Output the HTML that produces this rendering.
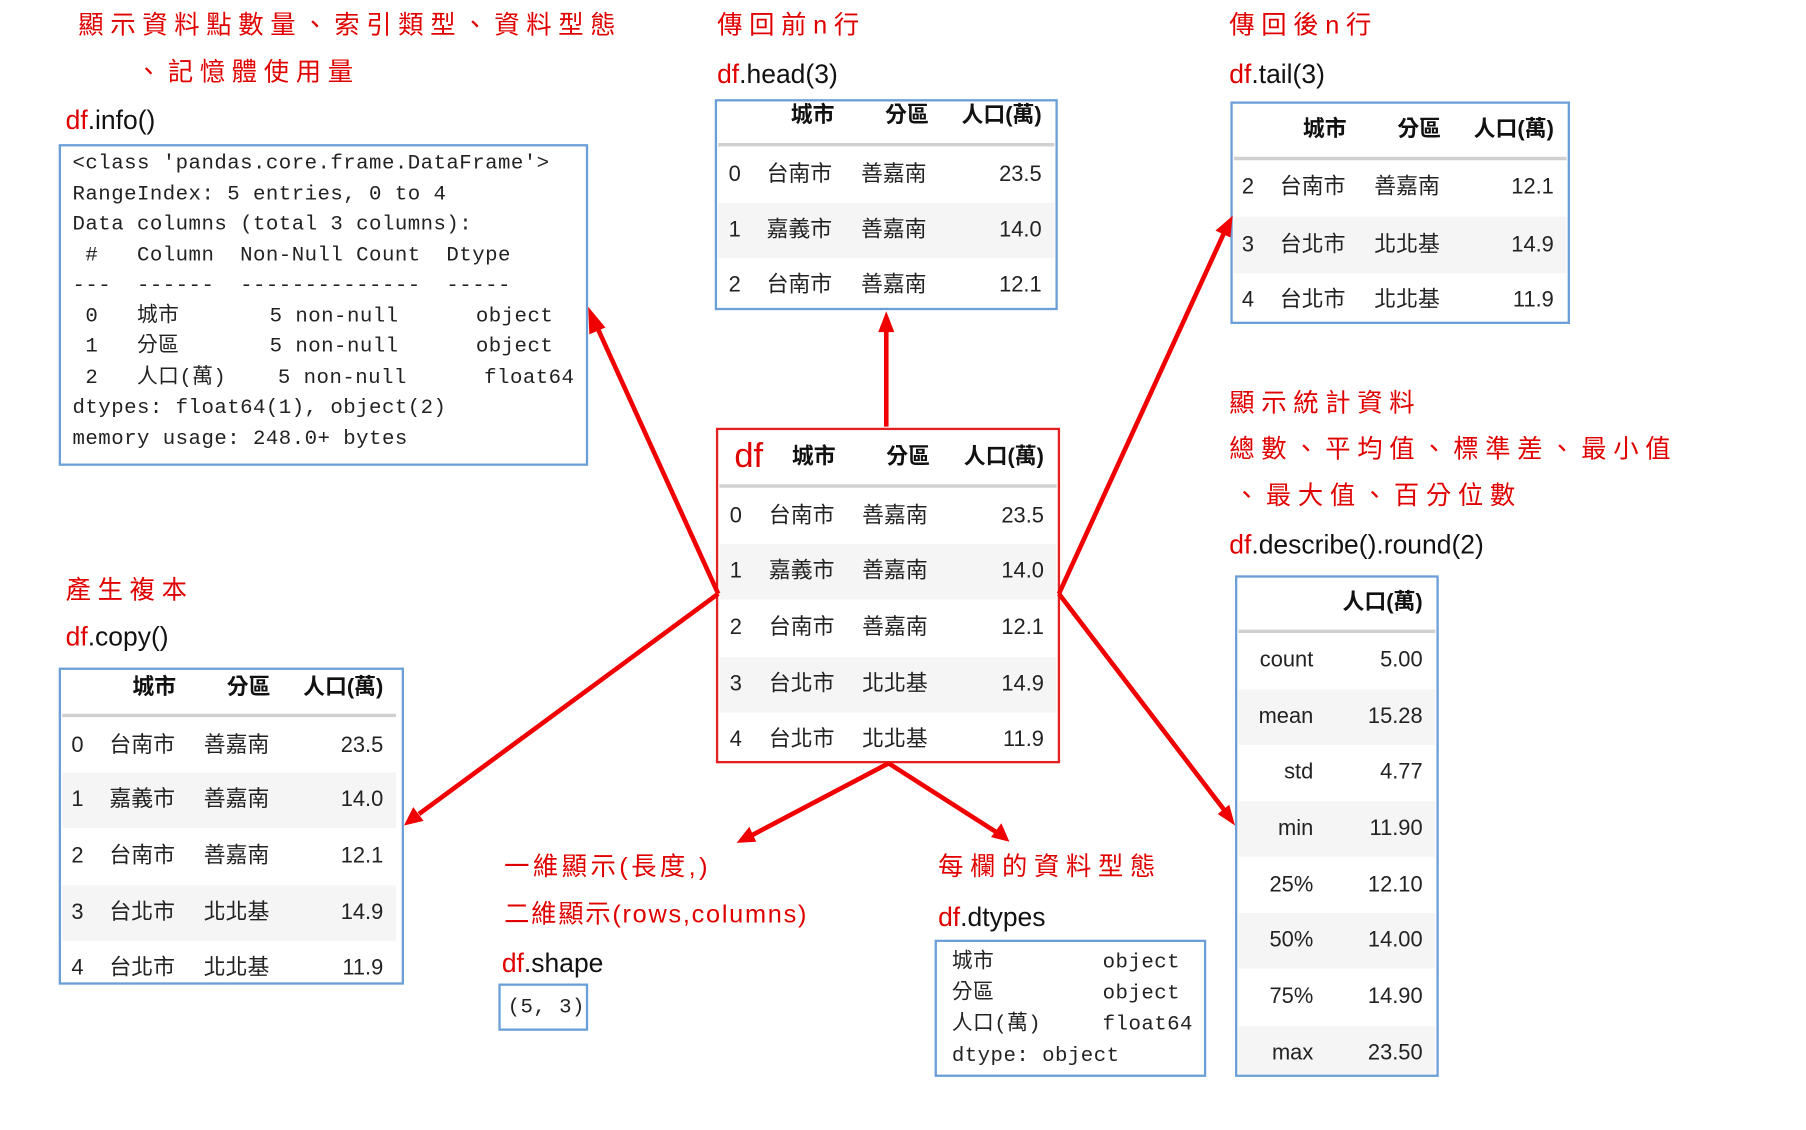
<!DOCTYPE html>
<html><head><meta charset="utf-8"><style>
html,body{margin:0;padding:0;background:#fff;overflow:hidden}
#w{position:absolute;left:0;top:0;width:1560px;height:980px;transform:scale(1.151,1.153);transform-origin:0 0;font-family:"Liberation Sans","Noto Sans CJK TC",sans-serif;color:#222}
.a{position:absolute;white-space:nowrap;line-height:24px}
.r{color:#e00000;font-size:22px;letter-spacing:5.8px}
.c{font-size:23px;color:#111}
.c b{font-weight:normal;color:#e00000}
.box{position:absolute;border:2px solid #6a9fd8;box-sizing:border-box}
.rb{border-color:#e62020}
.t{position:absolute;font-size:19px;line-height:24px;white-space:nowrap;color:#222}
.v{text-align:right;width:80px}
.h{font-weight:bold;color:#111}
.ln{position:absolute;height:3px;background:#d0d0d0}
.st{position:absolute;background:#f5f5f5}
.m{position:absolute;font-family:"Liberation Mono","Noto Sans CJK TC",monospace;font-size:18px;white-space:pre;color:#222;line-height:26.5px;letter-spacing:0.4px}
</style></head><body><div id="w">

<div class="a r" style="left:68px;top:10px">顯示資料點數量、索引類型、資料型態</div>
<div class="a r" style="left:118px;top:51px">、記憶體使用量</div>
<div class="a c" style="left:57px;top:92px"><b>df</b>.info()</div>
<div class="box" style="left:51px;top:125px;width:460px;height:279px"></div>
<div class="m" style="left:63px;top:129px">&lt;class 'pandas.core.frame.DataFrame'&gt;
RangeIndex: 5 entries, 0 to 4
Data columns (total 3 columns):
 #   Column  Non-Null Count  Dtype
---  ------  --------------  -----
 0   城市       5 non-null      object
 1   分區       5 non-null      object
 2   人口(萬)    5 non-null      float64
dtypes: float64(1), object(2)
memory usage: 248.0+ bytes</div>

<div class="a r" style="left:623px;top:10px">傳回前n行</div>
<div class="a c" style="left:623px;top:52px"><b>df</b>.head(3)</div>
<div class="box" style="left:621px;top:86px;width:298px;height:183px"></div>
<div class="st" style="left:624px;top:176px;width:292px;height:48px"></div>
<div class="ln" style="left:624px;top:124px;width:292px"></div>
<div class="t h" style="left:687px;top:89px">城市</div><div class="t h" style="left:769px;top:89px">分區</div><div class="t h v" style="left:825px;top:89px">人口(萬)</div>
<div class="t" style="left:633px;top:140px">0</div><div class="t" style="left:666px;top:140px">台南市</div><div class="t" style="left:748px;top:140px">善嘉南</div><div class="t v" style="left:825px;top:140px">23.5</div>
<div class="t" style="left:633px;top:188px">1</div><div class="t" style="left:666px;top:188px">嘉義市</div><div class="t" style="left:748px;top:188px">善嘉南</div><div class="t v" style="left:825px;top:188px">14.0</div>
<div class="t" style="left:633px;top:236px">2</div><div class="t" style="left:666px;top:236px">台南市</div><div class="t" style="left:748px;top:236px">善嘉南</div><div class="t v" style="left:825px;top:236px">12.1</div>

<div class="a r" style="left:1068px;top:10px">傳回後n行</div>
<div class="a c" style="left:1068px;top:52px"><b>df</b>.tail(3)</div>
<div class="box" style="left:1069px;top:88px;width:295px;height:193px"></div>
<div class="st" style="left:1072px;top:188px;width:289px;height:49px"></div>
<div class="ln" style="left:1072px;top:136px;width:289px"></div>
<div class="t h" style="left:1132px;top:101px">城市</div><div class="t h" style="left:1214px;top:101px">分區</div><div class="t h v" style="left:1270px;top:101px">人口(萬)</div>
<div class="t" style="left:1079px;top:151px">2</div><div class="t" style="left:1112px;top:151px">台南市</div><div class="t" style="left:1194px;top:151px">善嘉南</div><div class="t v" style="left:1270px;top:151px">12.1</div>
<div class="t" style="left:1079px;top:201px">3</div><div class="t" style="left:1112px;top:201px">台北市</div><div class="t" style="left:1194px;top:201px">北北基</div><div class="t v" style="left:1270px;top:201px">14.9</div>
<div class="t" style="left:1079px;top:249px">4</div><div class="t" style="left:1112px;top:249px">台北市</div><div class="t" style="left:1194px;top:249px">北北基</div><div class="t v" style="left:1270px;top:249px">11.9</div>

<!-- center -->
<div class="box rb" style="left:622px;top:371px;width:299px;height:291px"></div>
<div class="st" style="left:625px;top:472px;width:293px;height:48px"></div>
<div class="st" style="left:625px;top:570px;width:293px;height:48px"></div>
<div class="ln" style="left:625px;top:420px;width:293px"></div>
<div class="t" style="left:638px;top:380px;font-size:30px;line-height:32px;color:#e00000">df</div>
<div class="t h" style="left:688px;top:385px">城市</div><div class="t h" style="left:770px;top:385px">分區</div><div class="t h v" style="left:827px;top:385px">人口(萬)</div>
<div class="t" style="left:634px;top:436px">0</div><div class="t" style="left:668px;top:436px">台南市</div><div class="t" style="left:749px;top:436px">善嘉南</div><div class="t v" style="left:827px;top:436px">23.5</div>
<div class="t" style="left:634px;top:484px">1</div><div class="t" style="left:668px;top:484px">嘉義市</div><div class="t" style="left:749px;top:484px">善嘉南</div><div class="t v" style="left:827px;top:484px">14.0</div>
<div class="t" style="left:634px;top:533px">2</div><div class="t" style="left:668px;top:533px">台南市</div><div class="t" style="left:749px;top:533px">善嘉南</div><div class="t v" style="left:827px;top:533px">12.1</div>
<div class="t" style="left:634px;top:582px">3</div><div class="t" style="left:668px;top:582px">台北市</div><div class="t" style="left:749px;top:582px">北北基</div><div class="t v" style="left:827px;top:582px">14.9</div>
<div class="t" style="left:634px;top:630px">4</div><div class="t" style="left:668px;top:630px">台北市</div><div class="t" style="left:749px;top:630px">北北基</div><div class="t v" style="left:827px;top:630px">11.9</div>

<!-- stats -->
<div class="a r" style="left:1068px;top:338px">顯示統計資料</div>
<div class="a r" style="left:1068px;top:378px">總數、平均值、標準差、最小值</div>
<div class="a r" style="left:1072px;top:418px">、最大值、百分位數</div>
<div class="a c" style="left:1068px;top:460px"><b>df</b>.describe().round(2)</div>
<div class="box" style="left:1073px;top:499px;width:177px;height:435px"></div>
<div class="ln" style="left:1076px;top:546px;width:171px"></div>
<div class="st" style="left:1076px;top:598px;width:171px;height:48px"></div>
<div class="st" style="left:1076px;top:695px;width:171px;height:48px"></div>
<div class="st" style="left:1076px;top:792px;width:171px;height:48px"></div>
<div class="st" style="left:1076px;top:890px;width:171px;height:42px"></div>
<div class="t h v" style="left:1156px;top:511px">人口(萬)</div>
<div class="t v" style="left:1061px;top:561px">count</div><div class="t v" style="left:1156px;top:561px">5.00</div>
<div class="t v" style="left:1061px;top:610px">mean</div><div class="t v" style="left:1156px;top:610px">15.28</div>
<div class="t v" style="left:1061px;top:658px">std</div><div class="t v" style="left:1156px;top:658px">4.77</div>
<div class="t v" style="left:1061px;top:707px">min</div><div class="t v" style="left:1156px;top:707px">11.90</div>
<div class="t v" style="left:1061px;top:756px">25%</div><div class="t v" style="left:1156px;top:756px">12.10</div>
<div class="t v" style="left:1061px;top:804px">50%</div><div class="t v" style="left:1156px;top:804px">14.00</div>
<div class="t v" style="left:1061px;top:853px">75%</div><div class="t v" style="left:1156px;top:853px">14.90</div>
<div class="t v" style="left:1061px;top:902px">max</div><div class="t v" style="left:1156px;top:902px">23.50</div>

<!-- copy -->
<div class="a r" style="left:57px;top:500px">產生複本</div>
<div class="a c" style="left:57px;top:540px"><b>df</b>.copy()</div>
<div class="box" style="left:51px;top:579px;width:300px;height:275px"></div>
<div class="st" style="left:54px;top:670px;width:290px;height:48px"></div>
<div class="st" style="left:54px;top:768px;width:290px;height:48px"></div>
<div class="ln" style="left:54px;top:619px;width:290px"></div>
<div class="t h" style="left:115px;top:585px">城市</div><div class="t h" style="left:197px;top:585px">分區</div><div class="t h v" style="left:253px;top:585px">人口(萬)</div>
<div class="t" style="left:62px;top:635px">0</div><div class="t" style="left:95px;top:635px">台南市</div><div class="t" style="left:177px;top:635px">善嘉南</div><div class="t v" style="left:253px;top:635px">23.5</div>
<div class="t" style="left:62px;top:682px">1</div><div class="t" style="left:95px;top:682px">嘉義市</div><div class="t" style="left:177px;top:682px">善嘉南</div><div class="t v" style="left:253px;top:682px">14.0</div>
<div class="t" style="left:62px;top:731px">2</div><div class="t" style="left:95px;top:731px">台南市</div><div class="t" style="left:177px;top:731px">善嘉南</div><div class="t v" style="left:253px;top:731px">12.1</div>
<div class="t" style="left:62px;top:780px">3</div><div class="t" style="left:95px;top:780px">台北市</div><div class="t" style="left:177px;top:780px">北北基</div><div class="t v" style="left:253px;top:780px">14.9</div>
<div class="t" style="left:62px;top:828px">4</div><div class="t" style="left:95px;top:828px">台北市</div><div class="t" style="left:177px;top:828px">北北基</div><div class="t v" style="left:253px;top:828px">11.9</div>

<!-- shape -->
<div class="a r" style="left:438px;top:740px;letter-spacing:3px">一維顯示(長度,)</div>
<div class="a r" style="left:438px;top:781px;letter-spacing:1.5px">二維顯示(rows,columns)</div>
<div class="a c" style="left:436px;top:823px"><b>df</b>.shape</div>
<div class="box" style="left:433px;top:853px;width:78px;height:41px"></div>
<div class="m" style="left:441px;top:861px">(5, 3)</div>

<!-- dtypes -->
<div class="a r" style="left:815px;top:740px">每欄的資料型態</div>
<div class="a c" style="left:815px;top:783px"><b>df</b>.dtypes</div>
<div class="box" style="left:812px;top:815px;width:236px;height:119px"></div>
<div class="m" style="left:827px;top:822px">城市</div><div class="m" style="left:958px;top:822px">object</div>
<div class="m" style="left:827px;top:849px">分區</div><div class="m" style="left:958px;top:849px">object</div>
<div class="m" style="left:827px;top:876px">人口(萬)</div><div class="m" style="left:958px;top:876px">float64</div>
<div class="m" style="left:827px;top:903px">dtype: object</div>

<svg style="position:absolute;left:0;top:0" width="1560" height="980">
<g stroke="#f00000" stroke-width="4" fill="none">
<line x1="624" y1="515" x2="518" y2="282"/>
<line x1="770" y1="370" x2="770" y2="285"/>
<line x1="920" y1="515" x2="1063" y2="203"/>
<line x1="920" y1="515" x2="1064" y2="703"/>
<line x1="624" y1="515" x2="364" y2="706"/>
<line x1="772" y1="662" x2="654" y2="724"/>
<line x1="772" y1="662" x2="866" y2="722"/>
</g>
<g fill="#f00000">
<polygon points="511,266 512,290 526,284"/>
<polygon points="770,270 763,288 777,288"/>
<polygon points="1071,187 1056,200 1069,206"/>
<polygon points="1073,716 1058,706 1068,698"/>
<polygon points="351,716 359,700 368,712"/>
<polygon points="640,731 651,717 657,730"/>
<polygon points="877,730 861,726 870,714"/>
</g>
</svg>
</div></body></html>
